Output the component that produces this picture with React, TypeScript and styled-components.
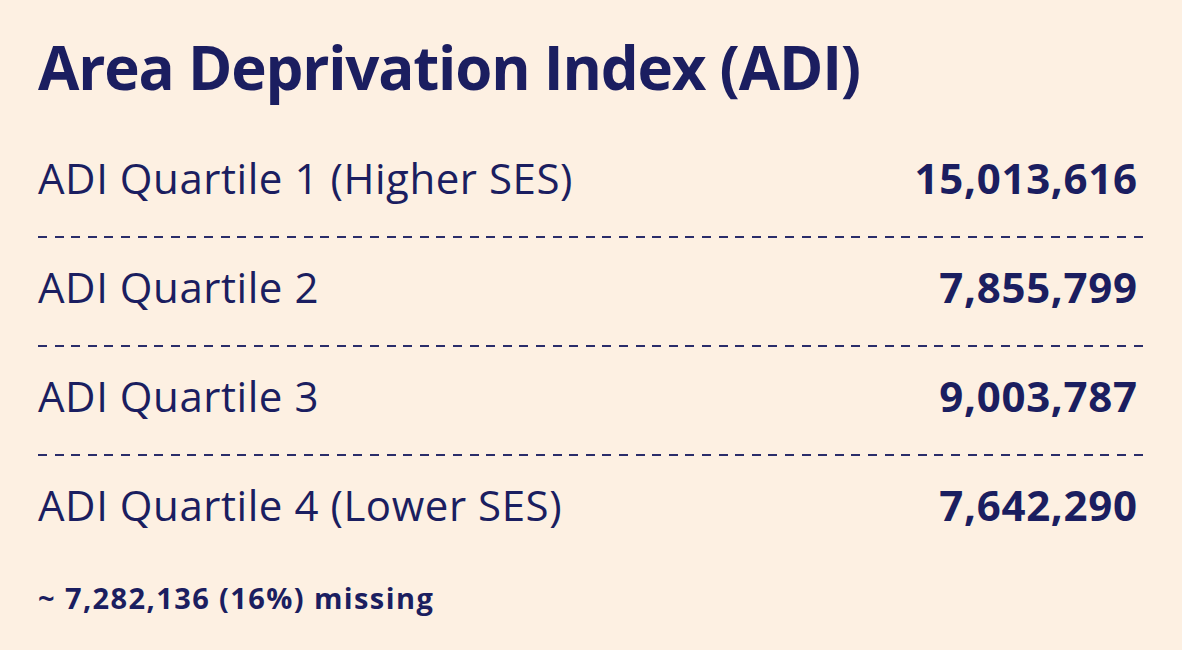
import React from "react";
import styled, { createGlobalStyle } from "styled-components";

const Global = createGlobalStyle`
  html, body { margin: 0; padding: 0; background: #fdf0e2; }
  body { font-family: "Open Sans", "Noto Sans", sans-serif; color: #1b1e60; }
`;

const Page = styled.div`
  width: 1182px;
  height: 650px;
  box-sizing: border-box;
  padding: 25px 37px 0 38px;
  background: #fdf0e2;
  display: flex;
  flex-direction: column;
`;

const Title = styled.h1`
  margin: 0;
  font-size: 60px;
  line-height: 84px;
  font-weight: 700;
  letter-spacing: -1.2px;
  color: #1b1e60;
`;

const List = styled.div`
  margin-top: 39px;
  display: flex;
  flex-direction: column;
`;

const Row = styled.div`
  display: flex;
  justify-content: space-between;
  align-items: baseline;
  padding-right: 8px;
  height: 60px;
  line-height: 60px;
  font-size: 42px;
`;

const Label = styled.span`
  font-weight: 400;
  letter-spacing: 0.55px;
`;

const Value = styled.span`
  font-weight: 700;
  letter-spacing: 0.7px;
  margin-right: -0.7px;
`;

const Divider = styled.div`
  height: 2px;
  margin: 28px 0 19px;
  background: repeating-linear-gradient(
    to right,
    #2a2d6a 0,
    #2a2d6a 9px,
    transparent 9px,
    transparent 16.6px
  );
`;

const Note = styled.div`
  margin-top: 43px;
  font-size: 29px;
  font-weight: 700;
  letter-spacing: 1.4px;
`;

const rows = [
  { label: "ADI Quartile 1 (Higher SES)", value: "15,013,616" },
  { label: "ADI Quartile 2", value: "7,855,799" },
  { label: "ADI Quartile 3", value: "9,003,787" },
  { label: "ADI Quartile 4 (Lower SES)", value: "7,642,290" },
];

export default function App() {
  return (
    <>
      <Global />
      <Page>
        <Title>Area Deprivation Index (ADI)</Title>
        <List>
          {rows.map((r, i) => (
            <React.Fragment key={r.label}>
              <Row>
                <Label>{r.label}</Label>
                <Value>{r.value}</Value>
              </Row>
              {i < rows.length - 1 && <Divider />}
            </React.Fragment>
          ))}
        </List>
        <Note>~ 7,282,136 (16%) missing</Note>
      </Page>
    </>
  );
}
